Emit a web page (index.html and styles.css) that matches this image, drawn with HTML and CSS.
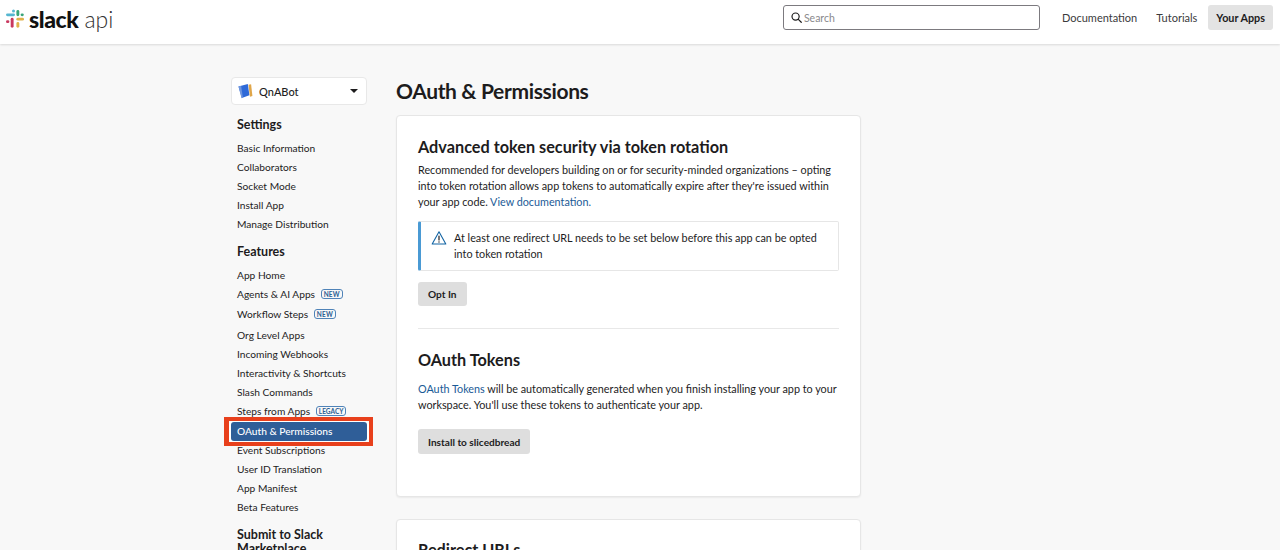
FILE: index.html
```html
<!DOCTYPE html>
<html lang="en">
<head>
<meta charset="utf-8">
<title>OAuth &amp; Permissions | Slack API</title>
<link rel="stylesheet" href="styles.css">
</head>
<body>
<header class="topbar">
  <a class="brand">
    <svg class="brand-mark" viewBox="0 0 20 20" width="20" height="20" aria-hidden="true">
      <rect x="7" y="0.6" width="3" height="3" rx="1.5" fill="#56b6d0"/>
      <rect x="1" y="4.4" width="9" height="2.9" rx="1.45" fill="#56b6d0"/>
      <rect x="11.4" y="1" width="2.9" height="6.3" rx="1.45" fill="#3aa57a"/>
      <rect x="15.6" y="4.4" width="3.2" height="2.9" rx="1.45" fill="#3aa57a"/>
      <rect x="11.4" y="8.7" width="7.6" height="2.9" rx="1.45" fill="#e0b14a"/>
      <rect x="11.4" y="13" width="2.9" height="5.8" rx="1.45" fill="#e0b14a"/>
      <rect x="5.7" y="8.7" width="2.9" height="10" rx="1.45" fill="#c9385f"/>
      <rect x="1" y="11.2" width="3.4" height="2.9" rx="1.45" fill="#c9385f"/>
    </svg>
    <span class="brand-slack">slack</span>
    <span class="brand-api">api</span>
  </a>
  <div class="top-actions">
    <label class="search">
      <svg viewBox="0 0 12 12" width="11" height="11" aria-hidden="true"><circle cx="5" cy="5" r="3.9" fill="none" stroke="#1d1c1d" stroke-width="1.3"/><path d="M8 8l3.2 3.2" stroke="#1d1c1d" stroke-width="1.3" stroke-linecap="round"/></svg>
      <span>Search</span>
    </label>
    <nav class="top-nav">
      <a class="top-link">Documentation</a>
      <a class="top-link">Tutorials</a>
      <a class="top-link top-current">Your Apps</a>
    </nav>
  </div>
</header>

<div class="page">
  <aside class="sidebar">
    <div class="app-picker">
      <svg class="app-icon" viewBox="0 0 16 16" width="16" height="16" aria-hidden="true">
        <path d="M11.5 1.8l2.6-.6L15.4 13l-2.4.8z" fill="#e0a64a"/>
        <path d="M1.5 3.4L10.8 1l1.6 11.2-7.6 2.9z" fill="#2f6ad8"/>
        <path d="M1.5 3.4l2.6-.7 1.8 12-1.4.5z" fill="#6f96de"/>
      </svg>
      <span class="app-name">QnABot</span>
      <span class="caret"></span>
    </div>

    <h3 class="side-title side-title-first">Settings</h3>
    <ul class="side-list">
      <li class="side-item">Basic Information</li>
      <li class="side-item">Collaborators</li>
      <li class="side-item">Socket Mode</li>
      <li class="side-item">Install App</li>
      <li class="side-item">Manage Distribution</li>
    </ul>

    <h3 class="side-title side-title-features">Features</h3>
    <ul class="side-list">
      <li class="side-item">App Home</li>
      <li class="side-item side-item-tagged">Agents &amp; AI Apps <span class="tag">NEW</span></li>
      <li class="side-item side-item-tagged">Workflow Steps <span class="tag">NEW</span></li>
      <li class="side-item">Org Level Apps</li>
      <li class="side-item">Incoming Webhooks</li>
      <li class="side-item">Interactivity &amp; Shortcuts</li>
      <li class="side-item">Slash Commands</li>
      <li class="side-item side-item-tagged">Steps from Apps <span class="tag tag-legacy">LEGACY</span></li>
      <li class="side-item side-item-active">OAuth &amp; Permissions</li>
      <li class="side-item">Event Subscriptions</li>
      <li class="side-item">User ID Translation</li>
      <li class="side-item">App Manifest</li>
      <li class="side-item">Beta Features</li>
    </ul>

    <h3 class="side-title side-title-submit">Submit to Slack Marketplace</h3>
  </aside>

  <main class="content">
    <h1 class="page-title">OAuth &amp; Permissions</h1>
    <section class="card">
      <h2 class="card-title">Advanced token security via token rotation</h2>
      <p class="copy">Recommended for developers building on or for security-minded organizations – opting into token rotation allows app tokens to automatically expire after they're issued within your app code. <a class="link">View documentation.</a></p>
      <div class="notice">
        <svg class="notice-icon" viewBox="0 0 16 16" width="16" height="16" aria-hidden="true">
          <path d="M8 1.8L14.8 14H1.2z" fill="none" stroke="#1264a3" stroke-width="1.1" stroke-linejoin="round"/>
          <path d="M8 6v4" stroke="#1d1c1d" stroke-width="1.2" stroke-linecap="round"/>
          <circle cx="8" cy="12" r=".7" fill="#1d1c1d"/>
        </svg>
        <p class="notice-text">At least one redirect URL needs to be set below before this app can be opted into token rotation</p>
      </div>
      <button class="btn">Opt In</button>
      <hr class="rule">
      <h2 class="card-title card-title-second">OAuth Tokens</h2>
      <p class="copy copy-tokens"><a class="link">OAuth Tokens</a> will be automatically generated when you finish installing your app to your workspace. You'll use these tokens to authenticate your app.</p>
      <button class="btn btn-install">Install to slicedbread</button>
    </section>
    <section class="card card-next">
      <h2 class="card-title">Redirect URLs</h2>
    </section>
  </main>
</div>
</body>
</html>
```

FILE: styles.css
```css
* { box-sizing: border-box; }

html, body {
  margin: 0;
  height: 550px;
  overflow: hidden;
}

body {
  background: #f8f8f8;
  color: #1d1c1d;
  font-family: Lato, "Liberation Sans", sans-serif;
  font-size: 11px;
}

.topbar {
  height: 44px;
  background: #fff;
  box-shadow: 0 1px 2px rgba(0, 0, 0, .12);
  display: flex;
  align-items: center;
  justify-content: space-between;
  padding: 0 7px 0 5px;
}

.brand {
  display: flex;
  align-items: center;
  margin-top: -7px;
}

.brand-mark { margin-right: 4px; }

.brand-slack {
  font-size: 23px;
  font-weight: 900;
  letter-spacing: -.4px;
  color: #111;
  margin-right: 6px;
}

.brand-api {
  font-size: 23px;
  font-weight: 300;
  color: #333;
}

.top-actions {
  display: flex;
  align-items: center;
  margin-top: -9px;
}

.search {
  width: 257px;
  height: 25px;
  border: 1px solid #7c7a7f;
  border-radius: 3px;
  display: flex;
  align-items: center;
  gap: 2px;
  padding-left: 7px;
  color: #8a898c;
  font-size: 10.5px;
  background: #fff;
}

.top-nav {
  display: flex;
  align-items: center;
  margin-left: 13px;
}

.top-link {
  font-size: 11px;
  padding: 0 9px;
  line-height: 25px;
  height: 25px;
  color: #3b3a3c;
  margin-right: 1px;
}

.top-current {
  background: #e3e3e3;
  border-radius: 3px;
  color: #1d1c1d;
  font-size: 10.8px;
  font-weight: 700;
  margin: 0 0 0 1px;
  padding: 0 8px;
}

.page {
  display: flex;
  padding: 33px 0 0 231px;
  gap: 29px;
}

.sidebar { width: 136px; flex: none; }

.app-picker {
  height: 28px;
  background: #fff;
  border: 1px solid #e8e8e8;
  border-radius: 4px;
  display: flex;
  align-items: center;
  padding: 0 8px 0 5px;
  font-size: 11px;
  font-weight: 500;
}

.app-icon { margin-right: 6px; }
.app-name { flex: 1; color: #1d1c1d; }

.caret {
  width: 0;
  height: 0;
  border: 4px solid transparent;
  border-top: 4px solid #1d1c1d;
  border-bottom: 0;
}

.side-title {
  margin: 0;
  padding-left: 6px;
  font-size: 12.5px;
  line-height: 16px;
  font-weight: 700;
}

.side-title-first { margin-top: 12px; }
.side-title-features { margin-top: 10px; }
.side-title-submit { margin-top: 11px; line-height: 14px; }

.side-list {
  list-style: none;
  margin: 6px 0 0;
  padding: 0;
}

.side-item {
  height: 19px;
  line-height: 19px;
  padding-left: 6px;
  font-size: 10.2px;
  white-space: nowrap;
}

.side-item-tagged { height: 20.25px; }

.tag {
  display: inline-block;
  height: 10px;
  line-height: 9px;
  border: 1px solid #4f83b8;
  border-radius: 3px;
  padding: 0 2px;
  margin-left: 3px;
  font-size: 6.5px;
  font-weight: 700;
  letter-spacing: .2px;
  color: #2c5f94;
  vertical-align: 1px;
}

.tag-legacy { letter-spacing: 0; }

.side-item-active {
  background: #2f5e98;
  color: #fff;
  font-weight: 500;
  border-radius: 3px;
  box-shadow: 0 0 0 2px #fff;
  position: relative;
}

.side-item-active::after {
  content: "";
  position: absolute;
  inset: -5px -6px -5px -7px;
  border: 4px solid #e8401c;
  border-left-width: 5px;
}

.content { width: 465px; flex: none; }

.page-title {
  margin: 0;
  font-size: 21px;
  line-height: 28px;
  font-weight: 700;
  letter-spacing: -.35px;
  color: #1d1c1d;
}

.card {
  margin-top: 10px;
  background: #fff;
  border: 1px solid #e6e6e6;
  border-radius: 4px;
  box-shadow: 0 1px 2px rgba(0, 0, 0, .06);
  padding: 20px 21px 0;
  height: 382px;
}

.card-next { margin-top: 22px; padding-top: 19px; }

.card-title {
  margin: 0;
  font-size: 16.25px;
  line-height: 22px;
  font-weight: 700;
}

.card-title-second { margin-top: 20px; }

.copy {
  margin: 4px 0 0;
  font-size: 10.8px;
  line-height: 16px;
}

.copy-tokens { margin-top: 10px; }

.link { color: #1a5a96; }

.notice {
  margin-top: 11px;
  height: 50px;
  border: 1px solid #e6e6e6;
  border-left: 3px solid #4a9ad4;
  border-radius: 2px;
  display: flex;
  align-items: flex-start;
  padding: 8px 10px 0 10px;
  background: #fff;
}

.notice-icon { flex: none; margin-right: 7px; }

.notice-text {
  margin: 0;
  font-size: 10.8px;
  line-height: 16px;
}

.btn {
  display: block;
  margin-top: 11px;
  height: 24px;
  padding: 0 10px;
  border: 0;
  border-radius: 3px;
  background: #dedede;
  color: #1d1c1d;
  font-family: inherit;
  font-size: 10.1px;
  font-weight: 700;
}

.btn-install { margin-top: 16px; height: 25px; }

.rule {
  margin: 22px 0 0;
  border: 0;
  border-top: 1px solid #e8e8e8;
}
```
